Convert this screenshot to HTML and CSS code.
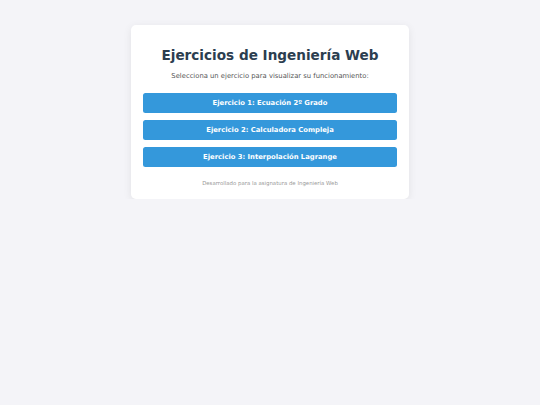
FILE: index.html
```html
<!DOCTYPE html>
<html lang="es">
<head>
<meta charset="utf-8">
<title>Ejercicios de Ingeniería Web</title>
<link rel="stylesheet" href="styles.css">
</head>
<body>
<div class="card">
  <h1 class="title">Ejercicios de Ingeniería Web</h1>
  <p class="subtitle">Selecciona un ejercicio para visualizar su funcionamiento:</p>
  <div class="menu">
    <a class="btn" href="#">Ejercicio 1: Ecuación 2º Grado</a>
    <a class="btn" href="#">Ejercicio 2: Calculadora Compleja</a>
    <a class="btn" href="#">Ejercicio 3: Interpolación Lagrange</a>
  </div>
  <p class="footer">Desarrollado para la asignatura de Ingeniería Web</p>
</div>
</body>
</html>
```
FILE: styles.css
```css
html, body {
  margin: 0;
  padding: 0;
}
body {
  background: #f4f4f8;
  font-family: "DejaVu Sans", Verdana, sans-serif;
  padding-top: 25px;
}
.card {
  width: 278px;
  box-sizing: border-box;
  margin: 0 auto;
  background: #fff;
  border-radius: 5px;
  box-shadow: 0 2px 8px rgba(0,0,0,0.08);
  padding: 20px 12px 10px;
  text-align: center;
}
.title {
  margin: 0;
  font-size: 13.6px;
  line-height: 20px;
  color: #2c3e50;
  font-weight: bold;
}
.subtitle {
  margin: 4px 0 0;
  font-size: 6.8px;
  line-height: 14px;
  color: #555;
}
.menu {
  margin-top: 10px;
  display: flex;
  flex-direction: column;
  gap: 7px;
}
.btn {
  display: block;
  background: #3498db;
  color: #fff;
  text-decoration: none;
  font-weight: bold;
  font-size: 6.8px;
  line-height: 20px;
  border-radius: 2.5px;
}
.footer {
  margin: 10px 0 0;
  font-size: 5.4px;
  line-height: 12px;
  color: #999;
}
```
